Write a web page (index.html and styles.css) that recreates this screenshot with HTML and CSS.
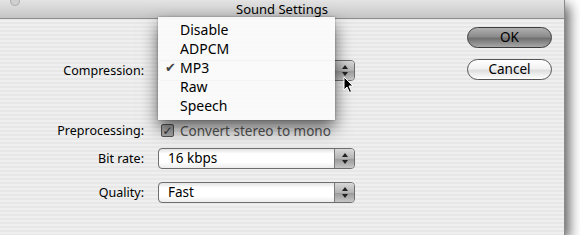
FILE: index.html
```html
<!DOCTYPE html>
<html lang="en">
<head>
    <meta charset="UTF-8">
    <title>Sound Settings</title>
    <link rel="stylesheet" href="styles.css">
</head>
<body>
    <div class="window">
        <div class="titlebar">
            <span class="corner"></span>
            <span class="title">Sound Settings</span>
        </div>
        <div class="content">
            <div class="form">
                <div class="field">
                    <span class="label">Compression:</span>
                    <!-- value hidden under the open menu -->
                    <div class="popup"><span class="value"></span><span class="arrows"></span></div>
                </div>
                <div class="field field-pre">
                    <span class="label">Preprocessing:</span>
                    <label class="check"><span class="box">&#10003;</span>Convert stereo to mono</label>
                </div>
                <div class="field field-bit">
                    <span class="label">Bit rate:</span>
                    <div class="popup"><span class="value">16 kbps</span><span class="arrows"></span></div>
                </div>
                <div class="field field-quality">
                    <span class="label">Quality:</span>
                    <div class="popup"><span class="value">Fast</span><span class="arrows"></span></div>
                </div>
            </div>
            <div class="actions">
                <button class="btn btn-default">OK</button>
                <button class="btn">Cancel</button>
            </div>
        </div>

        <!-- open popup menu for Compression -->
        <ul class="menu">
            <li>Disable</li>
            <li>ADPCM</li>
            <li class="checked">MP3</li>
            <li>Raw</li>
            <li>Speech</li>
        </ul>

        <svg class="cursor" width="12" height="18" viewBox="0 0 12 18">
            <path d="M1 1 L1 14 L4 11 L6.5 16.5 L8.5 15.5 L6 10 L10 10 Z" fill="#000" stroke="#fff" stroke-width="1"/>
        </svg>
    </div>
</body>
</html>
```

FILE: styles.css
```css
body {
    margin: 0;
    background: #fff;
    font-family: "Noto Sans", "DejaVu Sans", sans-serif;
    color: #000;
}
.window {
    position: relative;
    width: 565px;
    height: 235px;
    background: repeating-linear-gradient(#efefef 0 2px, #e7e7e7 2px 4px);
    border-right: 1px solid #8a8a8a;
    box-sizing: border-box;
    box-shadow: 4px 5px 12px rgba(0, 0, 0, 0.65);
    overflow: hidden;
}
.titlebar {
    position: relative;
    height: 18px;
    border-bottom: 1px solid #8c8c8c;
    background: linear-gradient(#e4e4e4, #d2d2d2 60%, #c4c4c4);
    text-align: center;
    font-size: 13px;
    line-height: 18px;
}
.corner {
    position: absolute;
    left: 10px;
    top: -5px;
    width: 8px;
    height: 9px;
    border-radius: 50%;
    background: #d0d0d0;
    border: 1px solid #b0b0b0;
}
.content {
    display: flex;
}
.form {
    width: 467px;
    padding-top: 41px;
}
.field {
    display: flex;
    align-items: center;
    height: 21px;
}
.field-pre {
    margin-top: 39px;
}
.field-bit {
    margin-top: 7px;
}
.field-quality {
    margin-top: 13px;
}
.label {
    width: 144px;
    margin-right: 14px;
    text-align: right;
    font-size: 12.5px;
}
.popup {
    display: flex;
    width: 197px;
    height: 21px;
    box-sizing: border-box;
    border: 1px solid #6e6e6e;
    border-radius: 4px;
    background: linear-gradient(#e4e4e4, #fff 25%, #fff 70%, #ececec);
    overflow: hidden;
}
.value {
    flex: 1;
    padding-left: 9px;
    font-size: 13.5px;
    line-height: 19px;
}
.arrows {
    position: relative;
    width: 19px;
    border-left: 1px solid #7a7a7a;
    background: linear-gradient(#d8d8d8, #b4b4b4 50%, #9c9c9c 55%, #c6c6c6);
}
.arrows::before,
.arrows::after {
    content: "";
    position: absolute;
    left: 7px;
    border-left: 3px solid transparent;
    border-right: 3px solid transparent;
}
.arrows::before {
    top: 4px;
    border-bottom: 4px solid #222;
}
.arrows::after {
    top: 11px;
    border-top: 4px solid #222;
}
.check {
    display: flex;
    align-items: center;
    font-size: 13.5px;
    color: #555;
}
.box {
    width: 11px;
    height: 11px;
    margin: 0 6px 0 3px;
    border: 1px solid #555;
    border-radius: 2px;
    background: #aaa;
    font-size: 12px;
    line-height: 11px;
    text-align: center;
    color: #333;
}
.actions {
    padding-top: 8px;
    display: flex;
    flex-direction: column;
}
.btn {
    width: 85px;
    height: 21px;
    border: 1px solid #555;
    border-radius: 11px;
    background: linear-gradient(#fff, #f2f2f2 45%, #dedede 55%, #fff);
    font-family: "Noto Sans", "DejaVu Sans", sans-serif;
    font-size: 13.5px;
    line-height: 17px;
    padding: 0;
    color: #000;
}
.btn + .btn {
    margin-top: 11px;
}
.btn-default {
    border-color: #3c3c3c;
    background: linear-gradient(#b0b0b0, #8c8c8c 45%, #707070 55%, #a8a8a8);
}
.menu {
    position: absolute;
    left: 158px;
    top: 17px;
    width: 177px;
    height: 103px;
    margin: 0;
    padding: 3px 0 0;
    box-sizing: border-box;
    list-style: none;
    background: rgba(250, 250, 250, 0.95);
    box-shadow: 0 8px 16px rgba(0, 0, 0, 0.6), 0 0 2px rgba(0, 0, 0, 0.35);
    font-size: 14px;
}
.menu li {
    height: 19px;
    line-height: 19px;
    padding-left: 22px;
    position: relative;
}
.menu .checked::before {
    content: "\2714";
    position: absolute;
    left: 7px;
    font-size: 13px;
    color: #444;
}
.cursor {
    position: absolute;
    left: 343px;
    top: 76px;
}
```
